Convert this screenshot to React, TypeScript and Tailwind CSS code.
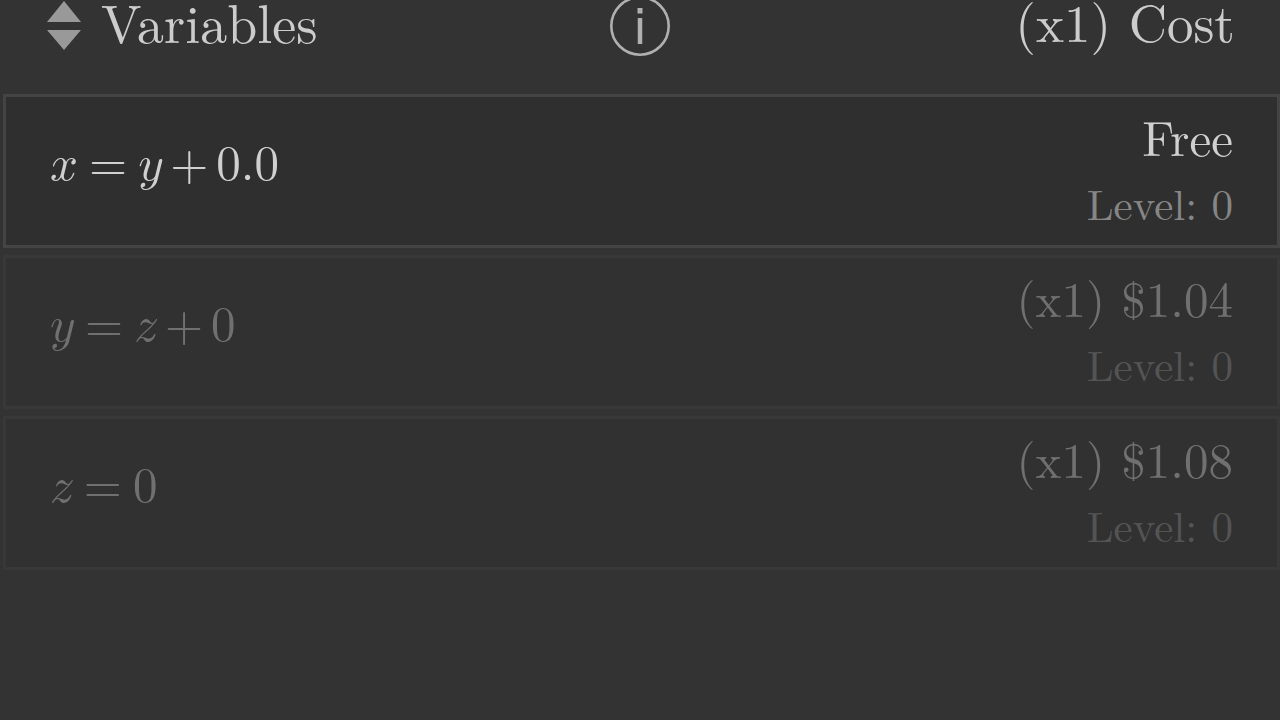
import type { ReactNode } from "react";

type Variable = {
  id: string;
  formula: ReactNode;
  price: string;
  level: number;
  available: boolean;
};

function Symbol({ children }: { children: string }) {
  return <span className="font-['Latin_Modern_Math','Latin_Modern_Roman','CMU_Serif','Liberation_Serif',serif]">{children}</span>;
}

const variables: Variable[] = [
  {
    id: "x",
    formula: (
      <>
        <Symbol>𝑥</Symbol>
        <span className="mx-[11px]">=</span>
        <Symbol>𝑦</Symbol>
        <span className="mx-2">+</span>
        <span>0.0</span>
      </>
    ),
    price: "Free",
    level: 0,
    available: true,
  },
  {
    id: "y",
    formula: (
      <>
        <Symbol>𝑦</Symbol>
        <span className="mx-[11px]">=</span>
        <Symbol>𝑧</Symbol>
        <span className="mx-2">+</span>
        <span>0</span>
      </>
    ),
    price: "(x1) $1.04",
    level: 0,
    available: false,
  },
  {
    id: "z",
    formula: (
      <>
        <Symbol>𝑧</Symbol>
        <span className="mx-[11px]">=</span>
        <span>0</span>
      </>
    ),
    price: "(x1) $1.08",
    level: 0,
    available: false,
  },
];

function SortIcon() {
  return (
    <svg viewBox="0 0 36 50" className="h-[50px] w-9 shrink-0" fill="#999999" aria-hidden="true">
      <path d="M19 1 36 22H2Z" />
      <path d="M19 50 2 30h34Z" />
    </svg>
  );
}

function InfoIcon() {
  return (
    <svg viewBox="0 0 60 60" className="size-[60px]" fill="none" stroke="#b0b0b0" aria-hidden="true">
      <circle cx="30" cy="30" r="28.7" strokeWidth="2.6" />
      <path d="M30 22v26" strokeWidth="4.5" />
      <path d="M30 12v5.5" strokeWidth="5" />
    </svg>
  );
}

function VariableRow({ variable }: { variable: Variable }) {
  const { formula, price, level, available } = variable;
  return (
    <button
      type="button"
      disabled={!available}
      className={`flex h-[154px] w-full items-center justify-between border-[3px] px-11 ${
        available ? "border-[#444444] bg-[#2f2f2f] text-[#d0d0d0]" : "border-[#383838] bg-[#313131] text-[#707070]"
      }`}
    >
      <span className="flex items-baseline pb-[18px] text-[49px] leading-none">{formula}</span>
      <span className="flex flex-col items-end gap-2 pb-1">
        <span className="text-[49px] leading-[58px]">{price}</span>
        <span className={`text-[43px] leading-[58px] ${available ? "text-[#868686]" : "text-[#545454]"}`}>
          Level: {level}
        </span>
      </span>
    </button>
  );
}

export default function App() {
  return (
    <main className="min-h-screen bg-[#333333] font-['Latin_Modern_Roman','CMU_Serif','Liberation_Serif',serif] text-[#cccccc]">
      <header className="grid h-[94px] grid-cols-[1fr_auto_1fr] items-start px-[45px]">
        <button type="button" className="flex items-start gap-5 text-[54px] leading-[42px]">
          <SortIcon />
          Variables
        </button>
        <button type="button" aria-label="Information" className="-mt-1">
          <InfoIcon />
        </button>
        <span className="text-right text-[53px] leading-10">(x1) Cost</span>
      </header>
      <section aria-label="Variables" className="flex flex-col gap-[7px] pl-[3px]">
        {variables.map((variable) => (
          <VariableRow key={variable.id} variable={variable} />
        ))}
      </section>
    </main>
  );
}
